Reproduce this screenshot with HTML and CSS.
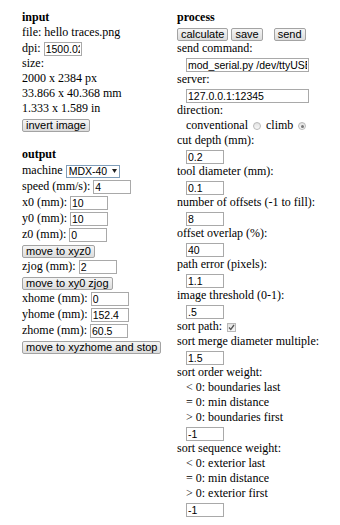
FILE: index.html
```html
<!DOCTYPE html>
<html lang="en">
<head>
  <meta charset="UTF-8" />
  <title>fab modules</title>
  <link rel="stylesheet" href="styles.css">
</head>
<body>
  <div class="panel">
    <div class="col col-left">
      <div class="line"><b>input</b></div>
      <div class="line">file: hello traces.png</div>
      <div class="line field">dpi: <input class="txt" value="1500.02"></div>
      <div class="line">size:</div>
      <div class="line">2000 x 2384 px</div>
      <div class="line">33.866 x 40.368 mm</div>
      <div class="line">1.333 x 1.589 in</div>
      <div class="line field"><button class="btn">invert image</button></div>
      <div class="line"></div>

      <div class="line"><b>output</b></div>
      <div class="line field">machine <span class="select"><select><option>MDX-40</option></select><svg width="5" height="4" viewBox="0 0 5 4"><path d="M0 0h5L2.5 4z" fill="#222"/></svg></span></div>
      <div class="line field">speed (mm/s): <input class="txt" value="4"></div>
      <div class="line field">x0 (mm): <input class="txt" value="10"></div>
      <div class="line field">y0 (mm): <input class="txt" value="10"></div>
      <div class="line field">z0 (mm): <input class="txt" value="0"></div>
      <div class="line field"><button class="btn">move to xyz0</button></div>
      <div class="line field">zjog (mm): <input class="txt" value="2"></div>
      <div class="line field"><button class="btn">move to xy0 zjog</button></div>
      <div class="line field">xhome (mm): <input class="txt" value="0"></div>
      <div class="line field">yhome (mm): <input class="txt" value="152.4"></div>
      <div class="line field">zhome (mm): <input class="txt" value="60.5"></div>
      <div class="line field"><button class="btn">move to xyzhome and stop</button></div>
    </div>

    <div class="col col-right">
      <div class="line"><b>process</b></div>
      <div class="line field"><button class="btn">calculate</button> <button class="btn">save</button> <button class="btn gap">send</button></div>
      <div class="line">send command:</div>
      <div class="line field indent"><input class="txt wide" value="mod_serial.py /dev/ttyUSB0 9600 dsrdtr"></div>
      <div class="line">server:</div>
      <div class="line field indent"><input class="txt wide" value="127.0.0.1:12345"></div>
      <div class="line">direction:</div>
      <div class="line indent">conventional <span class="radio"></span> climb <span class="radio on"></span></div>
      <div class="line">cut depth (mm):</div>
      <div class="line field indent"><input class="txt" value="0.2"></div>
      <div class="line">tool diameter (mm):</div>
      <div class="line field indent"><input class="txt" value="0.1"></div>
      <div class="line">number of offsets (-1 to fill):</div>
      <div class="line field indent"><input class="txt" value="8"></div>
      <div class="line">offset overlap (%):</div>
      <div class="line field indent"><input class="txt" value="40"></div>
      <div class="line">path error (pixels):</div>
      <div class="line field indent"><input class="txt" value="1.1"></div>
      <div class="line">image threshold (0-1):</div>
      <div class="line field indent"><input class="txt" value=".5"></div>
      <div class="line">sort path: <span class="check"><svg width="7" height="7" viewBox="0 0 7 7"><path d="M1 3.5l1.8 2L6 1" fill="none" stroke="#555" stroke-width="1.3"/></svg></span></div>
      <div class="line">sort merge diameter multiple:</div>
      <div class="line field indent"><input class="txt" value="1.5"></div>
      <div class="line">sort order weight:</div>
      <div class="line indent">&lt; 0: boundaries last</div>
      <div class="line indent">= 0: min distance</div>
      <div class="line indent">&gt; 0: boundaries first</div>
      <div class="line field indent"><input class="txt" value="-1"></div>
      <div class="line">sort sequence weight:</div>
      <div class="line indent">&lt; 0: exterior last</div>
      <div class="line indent">= 0: min distance</div>
      <div class="line indent">&gt; 0: exterior first</div>
      <div class="line field indent"><input class="txt" value="-1"></div>
    </div>
  </div>
</body>
</html>
```

FILE: styles.css
```css
body {
  margin: 0;
  background: #ffffff;
  color: #000000;
  font-family: "Liberation Serif", serif;
  font-size: 12px;
}

.panel {
  display: flex;
  padding: 10px 0 0 22px;
}

.col-left {
  width: 155px;
  flex: none;
}

.line {
  height: 15px;
  line-height: 15px;
  white-space: nowrap;
}

.field {
  height: 16px;
  line-height: 16px;
}

.indent {
  padding-left: 9px;
}

.txt {
  box-sizing: border-box;
  width: 38px;
  height: 14px;
  margin: 0;
  padding: 0 1px;
  border: 1px solid #a9a9a9;
  font: 10.5px "Liberation Sans", sans-serif;
  color: #000;
  background: #fff;
  vertical-align: middle;
}

.wide {
  width: 123px;
}

.btn {
  box-sizing: border-box;
  height: 13px;
  margin: 0;
  padding: 0 3px;
  border: 1px solid #a3a3a3;
  border-radius: 2px;
  background: linear-gradient(#f5f5f5, #dcdcdc);
  font: 11px "Liberation Sans", sans-serif;
  line-height: 11px;
  color: #000;
  vertical-align: middle;
}

.gap {
  margin-left: 8px;
}

.select {
  display: inline-flex;
  align-items: center;
  box-sizing: border-box;
  width: 54px;
  height: 13px;
  border: 1px solid #7f9db9;
  vertical-align: middle;
  background: #fff;
}

.select select {
  appearance: none;
  -webkit-appearance: none;
  flex: none;
  box-sizing: border-box;
  border: none;
  background: transparent;
  padding: 0 0 0 2px;
  margin: 0;
  width: 44px;
  font: 10.5px "Liberation Sans", sans-serif;
  color: #000;
}

.select svg {
  flex: none;
  margin-left: 1px;
}

.radio {
  display: inline-block;
  position: relative;
  box-sizing: border-box;
  width: 8px;
  height: 8px;
  margin: 0 2px;
  border: 1px solid #b8b8b8;
  border-radius: 50%;
  background: linear-gradient(#e2e2e2, #f8f8f8);
  vertical-align: middle;
}

.radio.on::after {
  content: "";
  position: absolute;
  left: 1.5px;
  top: 1.5px;
  width: 3px;
  height: 3px;
  border-radius: 50%;
  background: #777;
}

.check {
  display: inline-flex;
  align-items: center;
  justify-content: center;
  box-sizing: border-box;
  width: 9px;
  height: 9px;
  margin-left: 2px;
  border: 1px solid #b8b8b8;
  background: linear-gradient(#e2e2e2, #f8f8f8);
  vertical-align: middle;
}
```
